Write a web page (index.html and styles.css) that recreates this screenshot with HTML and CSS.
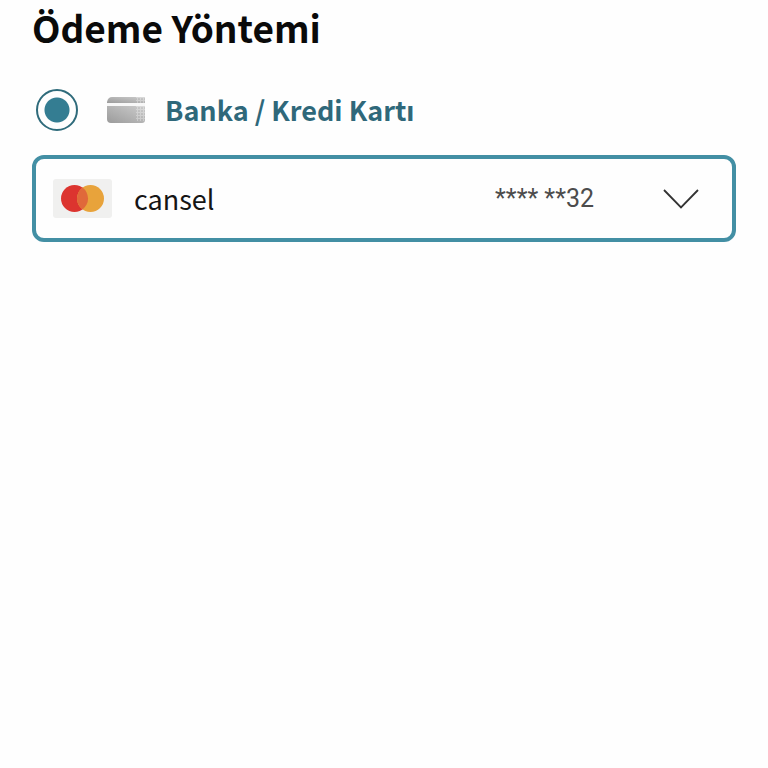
FILE: index.html
```html
<!DOCTYPE html>
<html lang="tr">
<head>
<meta charset="utf-8">
<meta name="viewport" content="width=device-width, initial-scale=1">
<title>Ödeme Yöntemi</title>
<link rel="stylesheet" href="styles.css">
</head>
<body>
<main class="payment">
  <h1 class="title">Ödeme Yöntemi</h1>
  <label class="method" for="card-method">
    <input class="radio" type="radio" id="card-method" name="method" checked>
    <svg class="card-icon" viewBox="0 0 38 26" aria-hidden="true">
      <defs>
        <linearGradient id="silver" x1="0" y1="1" x2="1" y2="0">
          <stop offset="0" stop-color="#9b9b9b"/>
          <stop offset="1" stop-color="#cccccc"/>
        </linearGradient>
        <pattern id="mesh" width="3" height="3" patternUnits="userSpaceOnUse">
          <path d="M0 .5H3M.5 0V3" stroke="#fff" stroke-width="1" opacity=".3"/>
        </pattern>
      </defs>
      <path d="M5 0H38V6H0V5Q1 0 5 0Z" fill="url(#silver)"/>
      <path d="M0 9H38V23Q38 26 35 26H4Q0 26 0 22Z" fill="url(#silver)"/>
      <path d="M0 6H38V9H0Z" fill="#f7f7f7"/>
      <path d="M29 0H38V6H29ZM29 9H38V24H29Z" fill="url(#mesh)"/>
    </svg>
    <span>Banka / Kredi Kartı</span>
  </label>
  <button class="card-select" type="button" aria-haspopup="listbox">
    <svg class="brand" viewBox="0 0 59 39" role="img" aria-label="Mastercard">
      <rect width="59" height="39" rx="3" fill="#f0f0ef"/>
      <circle cx="21.500" cy="19.500" r="13.500" fill="#dc342f"/>
      <circle cx="37.500" cy="19.500" r="13.500" fill="#e8a33b"/>
      <path d="M29.500 8.600A13.500 13.500 0 0 1 29.500 30.400A13.500 13.500 0 0 1 29.500 8.600Z" fill="#e0693a"/>
    </svg>
    <span class="holder">cansel</span>
    <span class="number">**** **32</span>
    <svg class="chevron" viewBox="0 0 36 20" aria-hidden="true">
      <path d="M1 1L18 18.500L35 1" fill="none" stroke="#333" stroke-width="1.800"/>
    </svg>
  </button>
</main>
</body>
</html>
```
FILE: styles.css
```css
* {
  box-sizing: border-box;
}

body {
  margin: 0;
  background: #fefefe;
  color: #0a0a0a;
  font-family: "Noto Sans CJK JP", "Noto Sans", sans-serif;
}

.payment {
  padding: 0 32px;
}

.title {
  margin: 0;
  font-size: 37px;
  font-weight: 700;
  line-height: 54px;
}

.method {
  display: flex;
  align-items: center;
  margin: 34px 0 23px 4px;
  color: #2f687a;
  font-size: 27px;
  font-weight: 700;
  line-height: 44px;
}

.radio {
  appearance: none;
  width: 42px;
  height: 42px;
  margin: 0;
  border: 2px solid #2f6b7b;
  border-radius: 50%;
  background: radial-gradient(circle, #347d92 12px, transparent 13px);
}

.card-icon {
  width: 38px;
  height: 26px;
  margin: 0 20px 0 29px;
}

.card-select {
  display: flex;
  align-items: center;
  width: 100%;
  padding: 20px 33px 20px 17px;
  border: 4px solid #438fa4;
  border-radius: 12px;
  background: #fefefe;
  color: #151515;
  font: inherit;
  font-size: 27px;
  line-height: 36px;
  text-align: left;
}

.brand {
  width: 59px;
  height: 39px;
}

.holder {
  flex: 1;
  margin-left: 22px;
}

.number {
  margin-right: 69px;
  color: #4c4c4c;
  font-family: Roboto, "Noto Sans", sans-serif;
  font-size: 25px;
}

.chevron {
  width: 36px;
  height: 20px;
}
```
